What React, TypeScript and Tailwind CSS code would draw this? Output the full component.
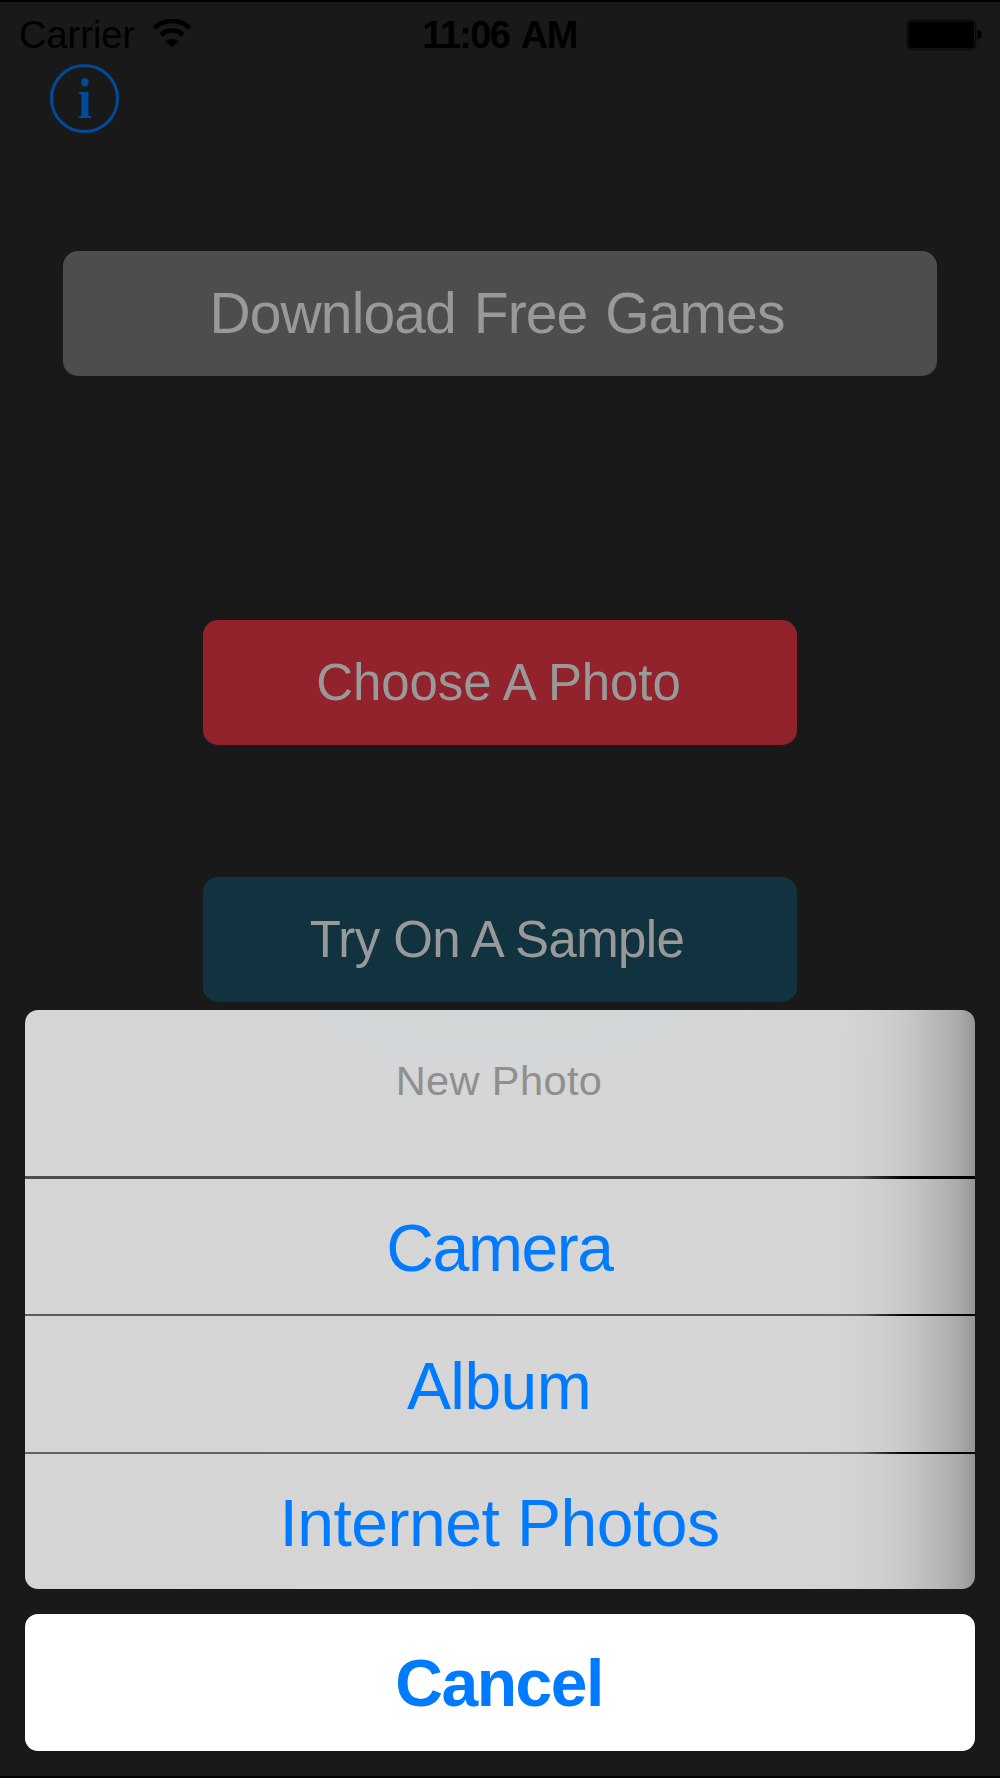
const mainButtons = [
  {
    label: "Download Free Games",
    className:
      "w-[874px] mt-[118px] bg-[#4d4d4d] text-[57px] tracking-[-0.9px] [word-spacing:3px] pr-[6px]",
  },
  {
    label: "Choose A Photo",
    className:
      "w-[594px] mt-[244px] bg-[#92232d] text-[51px] tracking-[-0.1px] pr-[3px]",
  },
  {
    label: "Try On A Sample",
    className:
      "w-[594px] mt-[132px] bg-[#11333f] text-[51px] tracking-[-0.6px] pr-[6px]",
  },
];

const sheetActions = [
  {
    label: "Camera",
    className: "h-[135px] pt-[3px] pr-[1px] tracking-[-1.4px]",
    line: "h-[3px] from-[#4e4b51]",
  },
  {
    label: "Album",
    className: "h-[136px] pt-[3px] pr-[2px] tracking-[-0.6px]",
    line: "h-[2px] from-[#5c5b60]",
  },
  {
    label: "Internet Photos",
    className: "h-[135px] pt-[3px] pr-[1px] tracking-[-0.5px]",
    line: "h-[2px] from-[#626364]",
  },
];

const WifiIcon = () => (
  <svg width="40" height="30" viewBox="0 0 40 30" fill="none">
    <path d="M2.2 9.2a25.2 25.2 0 0 1 35.6 0" stroke="#000" strokeWidth="4.6" />
    <path d="M9 16a15.6 15.6 0 0 1 22 0" stroke="#000" strokeWidth="4.6" />
    <path d="M13.6 22.2a9.3 9.3 0 0 1 12.8 0L20 28.4Z" fill="#000" />
  </svg>
);

const BatteryIcon = () => (
  <svg width="78" height="32" viewBox="0 0 78 32" fill="none">
    <rect
      x="1"
      y="1"
      width="68.5"
      height="29.5"
      rx="5"
      stroke="#0b0b0b"
      strokeWidth="1.6"
    />
    <rect x="2.5" y="2.5" width="65.5" height="26.5" rx="3" fill="#000" />
    <path d="M71.5 10.7c5.7 1 5.7 8.6 0 9.6Z" fill="#000" />
  </svg>
);

const StatusBar = () => (
  <div className="grid grid-cols-3 items-center h-[61px] mb-[1px] text-black text-[38px] leading-[65px]">
    <div className="flex items-center pl-[19px]">
      <span className="pt-[1px]">Carrier</span>
      <span className="ml-[17px] mb-[3px]">
        <WifiIcon />
      </span>
    </div>
    <div className="pt-[1px] pr-[1px] text-center font-bold tracking-[-1.6px] [word-spacing:4px]">
      11:06 AM
    </div>
    <div className="flex justify-end pr-[16px]">
      <BatteryIcon />
    </div>
  </div>
);

const ActionSheet = () => (
  <div className="absolute inset-x-[25px] top-[1008px]">
    <div className="rounded-[13px] overflow-hidden bg-[linear-gradient(90deg,#d5d5d5_0px,#d6d6d6_770px,#d4d4d4_820px,#cfcfcf_855px,#c6c6c6_885px,#b6b6b6_915px,#a9a9a9_935px,#959595_950px)]">
      <div className="flex items-center justify-center h-[166px] pb-[25px] pr-[2px] text-[41.5px] tracking-[0.4px] text-[#8f8f8f] bg-[radial-gradient(ellipse_420px_100px_at_475px_0px,#cfd7daaa,#d2d6d700)]">
        New Photo
      </div>
      {sheetActions.map((item) => (
        <div key={item.label}>
          <div
            className={`bg-linear-to-r from-88% to-black to-94% ${item.line}`}
          ></div>
          <div
            className={`flex items-center justify-center text-[66px] text-[#007aff] ${item.className}`}
          >
            {item.label}
          </div>
        </div>
      ))}
    </div>
    <div className="flex items-center justify-center h-[137px] mt-[25px] pr-[2px] pt-[1px] rounded-[13px] bg-white text-[66px] font-bold tracking-[-1.5px] text-[#007aff]">
      Cancel
    </div>
  </div>
);

const App = () => {
  return (
    <div className="relative w-[1000px] h-[1778px] overflow-hidden bg-[#191919] border-y-2 border-black font-['Liberation_Sans',Arial,sans-serif] leading-none">
      <StatusBar />
      <div className="flex items-center justify-center ml-[50px] w-[69px] h-[69px] rounded-full border-[3px] border-[#004a99] text-[#004a99] font-bold text-[56px] font-['Liberation_Serif',serif]">
        <span className="scale-x-90">i</span>
      </div>
      <div className="flex flex-col items-center">
        {mainButtons.map((item) => (
          <div
            key={item.label}
            className={`flex items-center justify-center h-[125px] rounded-[15px] text-[#999999] ${item.className}`}
          >
            {item.label}
          </div>
        ))}
      </div>
      <ActionSheet />
    </div>
  );
};

export default App;
